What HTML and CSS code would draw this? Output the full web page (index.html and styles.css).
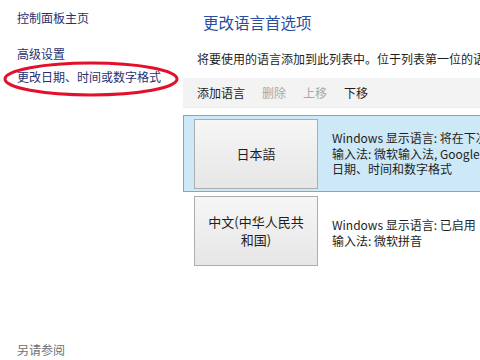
FILE: index.html
```html
<!DOCTYPE html>
<html lang="zh-CN">
<head>
    <meta charset="UTF-8">
    <title>语言</title>
    <link rel="stylesheet" href="styles.css">
</head>
<body>
    <div class="page">
        <div class="side">
            <a class="link home">控制面板主页</a>
            <a class="link adv">高级设置</a>
            <a class="link">更改日期、时间或数字格式</a>
            <div class="spacer"></div>
            <div class="seealso">另请参阅</div>
        </div>
        <div class="main">
            <h1 class="title">更改语言首选项</h1>
            <p class="desc">将要使用的语言添加到此列表中。位于列表第一位的语言是你的主要语言</p>
            <div class="toolbar">
                <span class="tool">添加语言</span>
                <span class="tool off">删除</span>
                <span class="tool off">上移</span>
                <span class="tool">下移</span>
            </div>
            <div class="lang selected">
                <div class="langbtn">日本語</div>
                <div class="info">
                    Windows 显示语言: 将在下次登录时启用<br>
                    输入法: 微软输入法, Google 日本语输入<br>
                    日期、时间和数字格式
                </div>
            </div>
            <div class="lang">
                <div class="langbtn">中文(中华人民共<br>和国)</div>
                <div class="info">
                    Windows 显示语言: 已启用<br>
                    输入法: 微软拼音
                </div>
            </div>
        </div>
    </div>
    <!-- 红圈标注 -->
    <svg class="mark" width="180" height="40" viewBox="0 0 180 40">
        <ellipse cx="89" cy="18" rx="86" ry="16" fill="none" stroke="#e3102c" stroke-width="3"/>
    </svg>
</body>
</html>
```

FILE: styles.css
```css
body {
    margin: 0;
    background: #fff;
    font-family: "Noto Sans CJK SC", "Liberation Sans", sans-serif;
    font-size: 12px;
    color: #1e1e1e;
    overflow: hidden;
}

.page {
    display: flex;
    height: 360px;
}

.side {
    width: 183px;
    flex-shrink: 0;
    display: flex;
    flex-direction: column;
    padding: 10px 0 2px 17px;
    box-sizing: border-box;
}
.link {
    color: #1f3170;
    line-height: 16px;
    height: 23px;
}
.home {
    margin-bottom: 13px;
}
.spacer {
    flex: 1;
}
.seealso {
    color: #707070;
    line-height: 16px;
}

.main {
    flex: 1;
    min-width: 0;
    overflow: hidden;
}
.title {
    margin: 12px 0 0 20px;
    font-size: 15.5px;
    font-weight: normal;
    color: #2a4d9e;
    line-height: 20px;
}
.desc {
    margin: 19px 0 0 14px;
    line-height: 16px;
    white-space: nowrap;
}

.toolbar {
    margin-top: 11px;
    height: 29px;
    background: #f3f3f3;
    border-bottom: 1px solid #ececec;
    display: flex;
    align-items: center;
    padding-left: 14px;
    gap: 17px;
}
.tool {
    color: #1e1e1e;
}
.tool.off {
    color: #a8a8a8;
}

.lang {
    display: flex;
    align-items: center;
    height: 77px;
    padding-left: 10px;
    border: 1px solid transparent;
    border-right: none;
    box-sizing: border-box;
}
.lang.selected {
    margin-top: 7px;
    background: #cde8f6;
    border-color: #5eb3e0;
}
.langbtn {
    width: 124px;
    height: 70px;
    box-sizing: border-box;
    border: 1px solid #adadad;
    background: linear-gradient(#f6f6f6, #e6e6e6);
    display: flex;
    align-items: center;
    justify-content: center;
    text-align: center;
    font-size: 13px;
    line-height: 18px;
    color: #1e1e1e;
    flex-shrink: 0;
}
.info {
    margin-left: 14px;
    line-height: 15.5px;
    white-space: nowrap;
}
.lang:not(.selected) .info {
    align-self: flex-start;
    margin-top: 24px;
}

.mark {
    position: absolute;
    left: 2px;
    top: 61px;
}
```
